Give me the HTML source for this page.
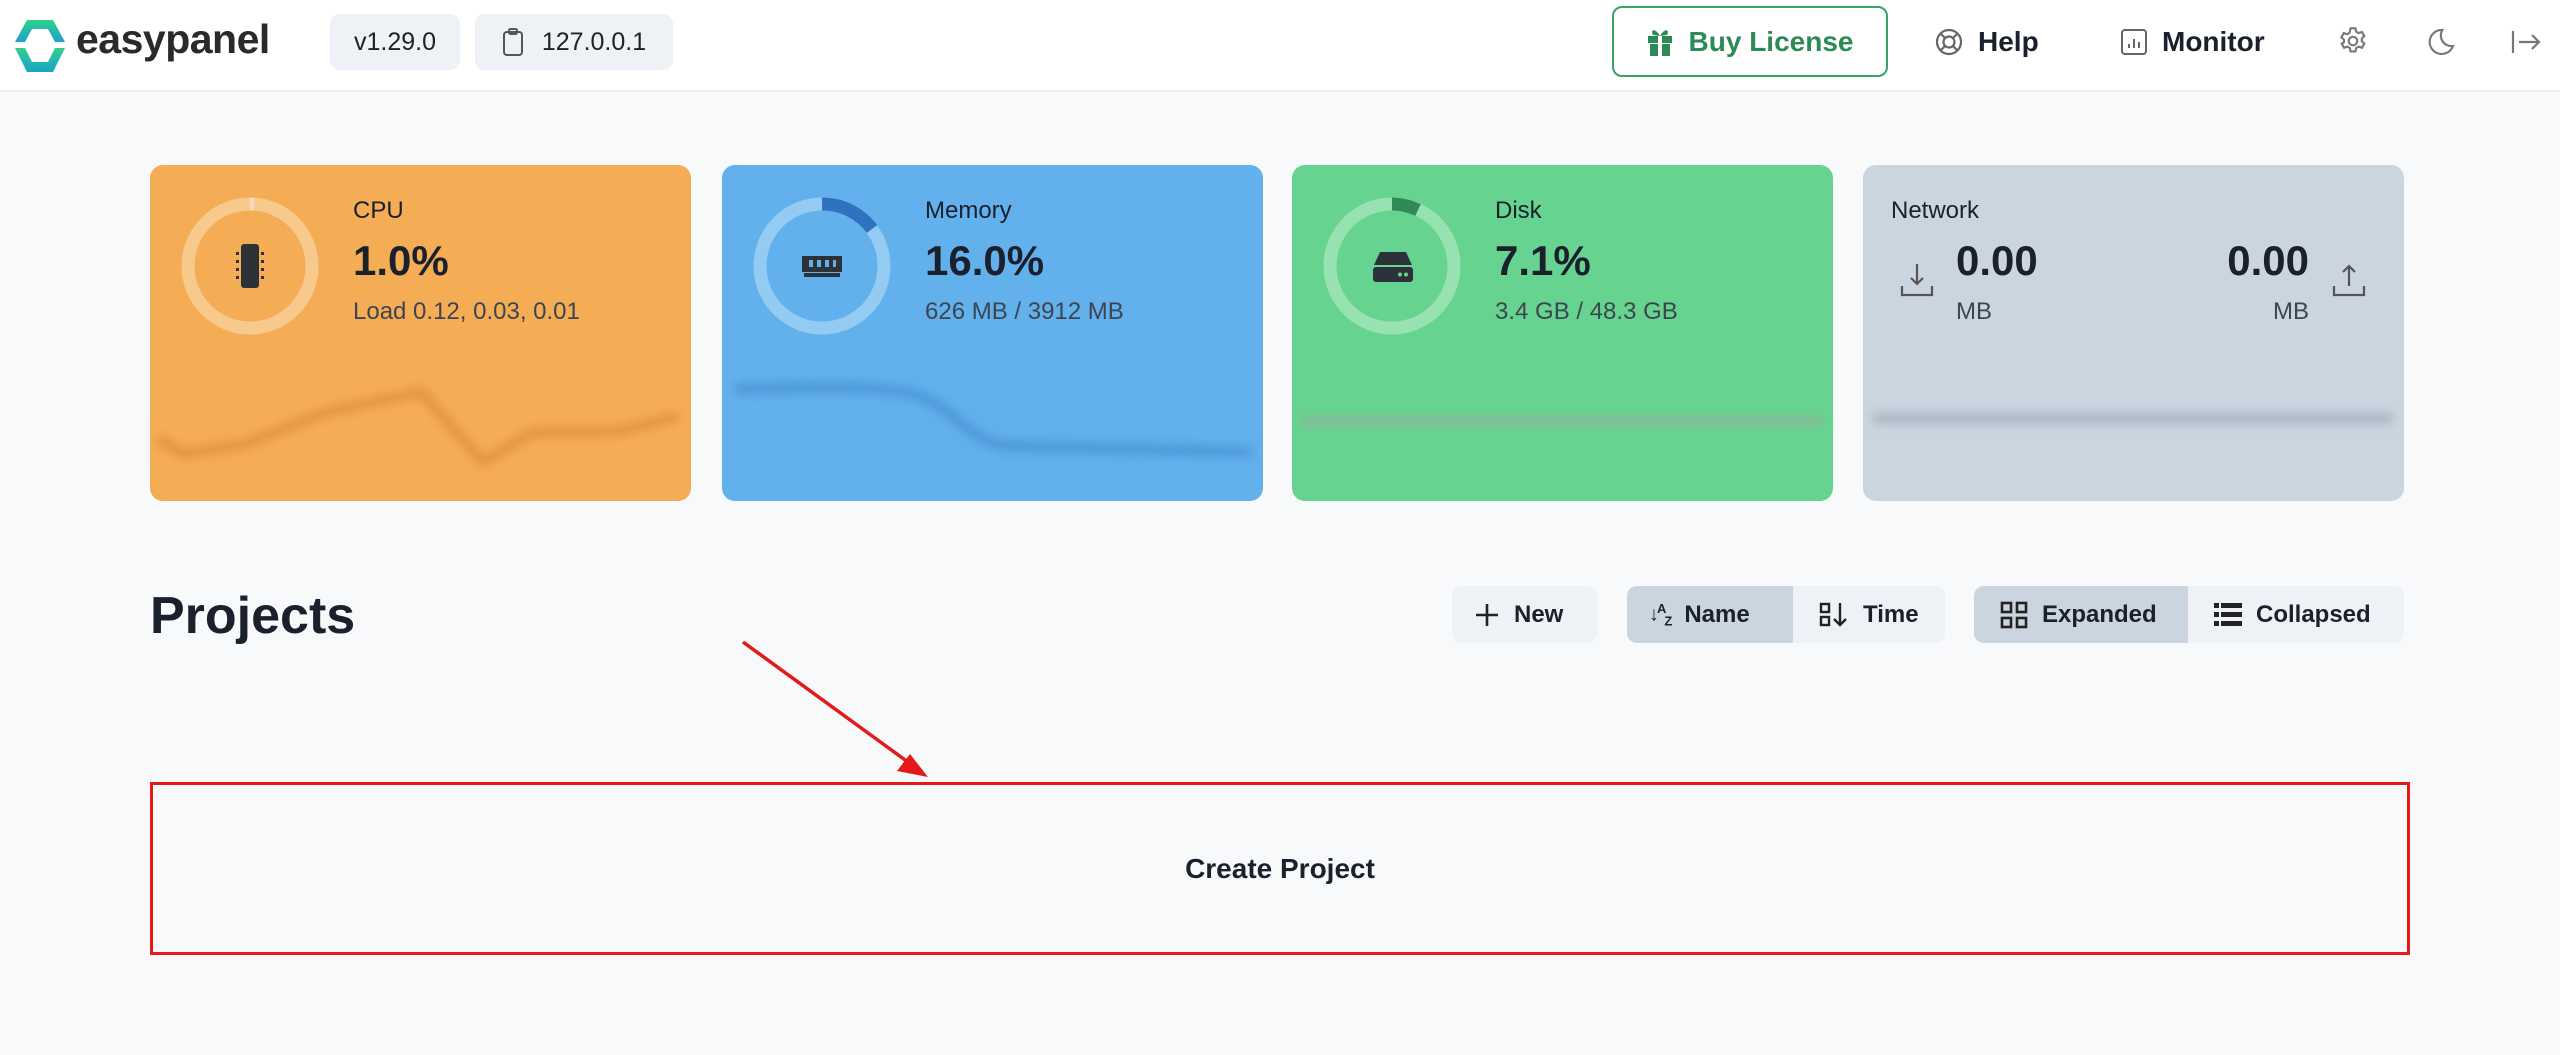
<!DOCTYPE html>
<html><head><meta charset="utf-8"><style>
*{box-sizing:border-box;margin:0;padding:0}
body{width:2560px;height:1055px;background:#f8f9fb;font-family:"Liberation Sans",sans-serif;color:#1a202c;position:relative;overflow:hidden}
.abs{position:absolute}
.hdr{left:0;top:0;width:2560px;height:92px;background:#fff;border-bottom:2px solid #eceef1}
.badge{background:#eef1f5;border-radius:10px;height:56px;top:14px;font-size:25px;display:flex;align-items:center;justify-content:center;color:#222}
.nav{top:26px;font-size:28px;font-weight:bold;color:#1a202c;display:flex;align-items:center;gap:14px}
.card{top:165px;width:541px;height:336px;border-radius:13px;overflow:hidden}
.card .t{position:absolute;left:203px;top:32px;font-size:24px;color:#1a202c}
.card .v{position:absolute;left:203px;top:72px;font-size:42px;font-weight:bold;color:#1a202c}
.card .s{position:absolute;left:203px;top:133px;font-size:24px;color:#3d4550}
.btn{top:586px;height:57px;border-radius:10px;background:#eef1f5;font-size:24px;font-weight:bold;display:flex;align-items:center;color:#1a202c}
.seg{height:57px;display:flex;align-items:center;gap:14px;padding:0 22px}
</style></head><body>
<div class="abs hdr"></div>
<svg class="abs" style="left:13px;top:18px" width="54" height="56" viewBox="0 0 54 56">
<defs><linearGradient id="lg" x1="0" y1="0" x2="0" y2="1"><stop offset="0" stop-color="#2fd08c"/><stop offset="1" stop-color="#1aa3c9"/></linearGradient></defs>
<path d="M14 2 H40 L52 24 L42 24 L35 11 H19 L12 24 L2 24 Z" fill="url(#lg)"/><path d="M2 30 L12 30 L19 44 H35 L42 30 L52 30 L40 54 H14 Z" fill="url(#lg)"/>
</svg>
<div class="abs" style="left:76px;top:16px;font-size:41px;font-weight:bold;color:#2a2a2a;letter-spacing:-0.5px">easypanel</div>
<div class="abs badge" style="left:330px;width:130px">v1.29.0</div>
<div class="abs badge" style="left:475px;width:198px;gap:18px"><svg width="22" height="30" viewBox="0 0 22 30" fill="none" stroke="#555" stroke-width="2"><rect x="2" y="5" width="18" height="23" rx="3"/><rect x="7" y="2" width="8" height="5" rx="1.5"/></svg>127.0.0.1</div>
<div class="abs" style="left:1612px;top:6px;width:276px;height:71px;border:2px solid #3aa16a;border-radius:10px;display:flex;align-items:center;justify-content:center;gap:16px;font-size:28px;font-weight:bold;color:#2c8a57">
<svg width="26" height="30" viewBox="0 0 26 30" fill="#2c8a57"><rect x="1" y="9" width="24" height="7"/><rect x="3" y="17" width="20" height="12"/><path d="M13 9 C8 0 3 3 6 8 Z M13 9 C18 0 23 3 20 8Z"/><rect x="11" y="9" width="4" height="20" fill="#fff"/></svg>Buy License</div>
<div class="abs nav" style="left:1934px"><svg width="30" height="30" viewBox="0 0 30 30" fill="none" stroke="#666" stroke-width="2.2"><circle cx="15" cy="15" r="12"/><circle cx="15" cy="15" r="5.5"/><path d="M7 7l4 4M23 7l-4 4M7 23l4-4M23 23l-4-4"/></svg>Help</div>
<div class="abs nav" style="left:2120px"><svg width="28" height="28" viewBox="0 0 28 28" fill="none" stroke="#666" stroke-width="2"><rect x="2" y="2" width="24" height="24" rx="3"/><path d="M9 20v-4M14 20v-9M19 20v-6"/></svg>Monitor</div>
<svg class="abs" style="left:2336px;top:24px" width="34" height="34" viewBox="0 0 24 24" fill="none" stroke="#777" stroke-width="1.5"><circle cx="12" cy="12" r="3"/><path d="M10.3 3h3.4l.5 2.4 1.8 1 2.3-.8 1.7 3-1.8 1.6v2l1.8 1.6-1.7 3-2.3-.8-1.8 1-.5 2.4h-3.4l-.5-2.4-1.8-1-2.3.8-1.7-3L5.6 13v-2L3.8 9.4l1.7-3 2.3.8 1.8-1z"/></svg>
<svg class="abs" style="left:2425px;top:25px" width="32" height="34" viewBox="0 0 24 24" fill="none" stroke="#777" stroke-width="1.6"><path d="M13 3a9 9 0 1 0 8 12A8 8 0 0 1 13 3z"/></svg>
<svg class="abs" style="left:2510px;top:28px" width="32" height="28" viewBox="0 0 32 28" fill="none" stroke="#777" stroke-width="2.2"><path d="M3 3v22M9 14h20M22 7l7 7-7 7"/></svg>

<svg width="0" height="0" style="position:absolute"><defs><filter id="b" filterUnits="userSpaceOnUse" x="0" y="0" width="541" height="336"><feGaussianBlur stdDeviation="5"/></filter></defs></svg>

<div class="abs card" style="left:150px;background:#f5ad55">
<svg class="abs" style="left:0;top:0" width="541" height="336">
<polyline points="8,273 33,289 95,279 177,247 271,227 333,297 381,268 470,266 529,251" fill="none" stroke="#e0913a" stroke-width="9" filter="url(#b)"/>
<circle cx="100" cy="101" r="62" fill="none" stroke="#f8c98d" stroke-width="13"/>
<path d="M100 39 A62 62 0 0 1 104 39" fill="none" stroke="#f1dcc0" stroke-width="13"/></svg>
<svg class="abs" style="left:86px;top:79px" width="28" height="44" viewBox="0 0 28 44" fill="#2d3238"><rect x="5" y="0" width="18" height="44" rx="3"/><g fill="#2d3238"><rect x="0" y="8" width="3" height="3"/><rect x="0" y="16" width="3" height="3"/><rect x="0" y="24" width="3" height="3"/><rect x="0" y="32" width="3" height="3"/><rect x="25" y="8" width="3" height="3"/><rect x="25" y="16" width="3" height="3"/><rect x="25" y="24" width="3" height="3"/><rect x="25" y="32" width="3" height="3"/></g></svg>
<div class="t">CPU</div><div class="v">1.0%</div><div class="s">Load 0.12, 0.03, 0.01</div></div>

<div class="abs card" style="left:722px;background:#62b0ec">
<svg class="abs" style="left:0;top:0" width="541" height="336">
<path d="M13 224 C100 222 170 220 200 232 C240 250 250 280 290 281 L530 287" fill="none" stroke="#4c97d6" stroke-width="10" filter="url(#b)"/>
<circle cx="100" cy="101" r="62" fill="none" stroke="#94cbf3" stroke-width="13"/>
<path d="M100 39 A62 62 0 0 1 150 64" fill="none" stroke="#2f72c0" stroke-width="13"/></svg>
<svg class="abs" style="left:80px;top:88px" width="40" height="26" viewBox="0 0 40 26" fill="#2d3238"><rect x="0" y="3" width="40" height="16"/><rect x="2" y="20" width="36" height="4"/><g fill="#62b0ec"><rect x="7" y="7" width="4" height="7"/><rect x="15" y="7" width="4" height="7"/><rect x="23" y="7" width="4" height="7"/><rect x="31" y="7" width="3" height="7"/></g></svg>
<div class="t">Memory</div><div class="v">16.0%</div><div class="s">626 MB / 3912 MB</div></div>

<div class="abs card" style="left:1292px;background:#66d490">
<svg class="abs" style="left:0;top:0" width="541" height="336">
<path d="M10 256 L530 256" fill="none" stroke="#86b89a" stroke-width="10" filter="url(#b)"/>
<circle cx="100" cy="101" r="62" fill="none" stroke="#96e2b2" stroke-width="13"/>
<path d="M100 39 A62 62 0 0 1 126 45" fill="none" stroke="#2f8a57" stroke-width="13"/></svg>
<svg class="abs" style="left:80px;top:87px" width="42" height="30" viewBox="0 0 42 30" fill="#2d3238"><path d="M8 0 H34 L40 13 H2 Z"/><rect x="1" y="15" width="40" height="15" rx="3"/><circle cx="28" cy="22.5" r="2" fill="#66d490"/><circle cx="34" cy="22.5" r="2" fill="#66d490"/></svg>
<div class="t">Disk</div><div class="v">7.1%</div><div class="s">3.4 GB / 48.3 GB</div></div>

<div class="abs card" style="left:1863px;background:#cbd5e0">
<svg class="abs" style="left:0;top:0" width="541" height="336">
<path d="M10 253 L530 253" fill="none" stroke="#a9b3bf" stroke-width="10" filter="url(#b)"/></svg>
<div class="t" style="left:28px">Network</div>
<svg class="abs" style="left:36px;top:97px" width="36" height="36" viewBox="0 0 36 36" fill="none" stroke="#555" stroke-width="2.2"><path d="M18 2v20M12 16l6 6 6-6M3 24v9h30v-9"/></svg>
<div class="v" style="left:93px">0.00</div><div class="s" style="left:93px">MB</div>
<div class="v" style="left:auto;right:95px">0.00</div><div class="s" style="left:auto;right:95px">MB</div>
<svg class="abs" style="left:468px;top:97px" width="36" height="36" viewBox="0 0 36 36" fill="none" stroke="#555" stroke-width="2.2"><path d="M18 24V4M12 10l6-6 6 6M3 24v9h30v-9"/></svg>
</div>

<div class="abs" style="left:150px;top:586px;font-size:52px;font-weight:bold;color:#1a202c">Projects</div>
<div class="abs btn" style="left:1452px;width:145px"><div class="seg"><svg width="26" height="26" viewBox="0 0 26 26" stroke="#222" stroke-width="2.6"><path d="M13 2v22M2 13h22"/></svg>New</div></div>
<div class="abs btn" style="left:1627px;width:318px;overflow:hidden"><div class="seg" style="background:#cbd5e0;width:166px"><span style="font-size:20px;letter-spacing:-2px">↓<sup style="font-size:13px">A</sup><sub style="font-size:13px">Z</sub></span>Name</div><div class="seg" style="padding-left:26px"><svg width="30" height="28" viewBox="0 0 30 28" fill="none" stroke="#222" stroke-width="2.4"><rect x="2" y="3" width="8" height="8"/><rect x="2" y="16" width="8" height="8"/><path d="M21 2v22M15 18l6 6 6-6"/></svg>Time</div></div>
<div class="abs btn" style="left:1974px;width:430px;overflow:hidden"><div class="seg" style="background:#cbd5e0;width:214px;padding-left:26px"><svg width="28" height="28" viewBox="0 0 28 28" fill="none" stroke="#222" stroke-width="2.6"><rect x="2" y="2" width="9" height="9"/><rect x="17" y="2" width="9" height="9"/><rect x="2" y="17" width="9" height="9"/><rect x="17" y="17" width="9" height="9"/></svg>Expanded</div><div class="seg" style="padding-left:26px"><svg width="28" height="26" viewBox="0 0 28 26" fill="#222"><rect x="0" y="1" width="5" height="5"/><rect x="7" y="1" width="21" height="5"/><rect x="0" y="10" width="5" height="5"/><rect x="7" y="10" width="21" height="5"/><rect x="0" y="19" width="5" height="5"/><rect x="7" y="19" width="21" height="5"/></svg>Collapsed</div></div>

<div class="abs" style="left:150px;top:782px;width:2260px;height:173px;border:3.5px solid #e41a1a;display:flex;align-items:center;justify-content:center;font-size:28px;font-weight:bold;color:#1a202c">Create Project</div>
<svg class="abs" style="left:0;top:0" width="2560" height="1055"><path d="M743 642 L912 765" stroke="#e41a1a" stroke-width="3.5"/><path d="M928 777 L897 771 L910 754 Z" fill="#e41a1a"/></svg>
</body></html>
